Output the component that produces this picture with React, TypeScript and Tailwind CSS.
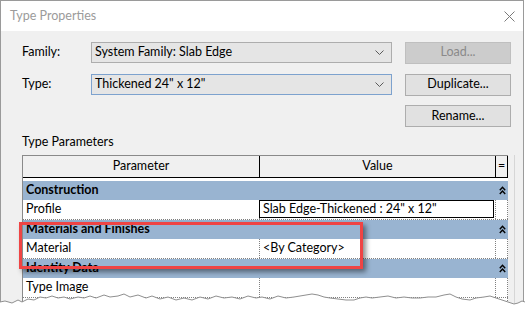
import React from "react";

function CloseIcon() {
  return (
    <svg width="11" height="11" viewBox="0 0 11 11" className="block">
      <path d="M0.5 0.5 L10.5 10.5 M10.5 0.5 L0.5 10.5" stroke="#7a7a7a" strokeWidth="1" fill="none" />
    </svg>
  );
}

function Chevron() {
  return (
    <svg width="9" height="5" viewBox="0 0 9 5" className="block">
      <path d="M0.5 0.5 L4.5 4.5 L8.5 0.5" stroke="#5a5a5a" strokeWidth="1" fill="none" />
    </svg>
  );
}

function Collapse() {
  return (
    <svg width="7" height="9" viewBox="0 0 7 9" className="block">
      <path d="M0.8 4.2 L3.5 1.2 L6.2 4.2 M0.8 8 L3.5 5 L6.2 8" stroke="#000" strokeWidth="1.4" fill="none" />
    </svg>
  );
}

function Select({ text, focused }: { text: string; focused?: boolean }) {
  return (
    <div
      className={
        "w-[301px] h-[21px] flex items-center justify-between pl-[3px] pr-[7px] bg-[#e5e5e5] border " +
        (focused ? "border-[#7da2ce]" : "border-[#adadad]")
      }
    >
      <span>{text}</span>
      <Chevron />
    </div>
  );
}

function Button({ label, disabled }: { label: string; disabled?: boolean }) {
  return (
    <div
      className={
        "w-[106px] h-[22px] flex items-center justify-center border " +
        (disabled ? "bg-[#cccccc] border-[#bfbfbf] text-[#8a8a8a]" : "bg-[#e1e1e1] border-[#adadad]")
      }
    >
      {label}
    </div>
  );
}

function Group({ title }: { title: string }) {
  return (
    <div className="flex h-[19px] bg-[#99b4d1]">
      <div className="w-[473px] pl-[3px] flex items-center font-bold">{title}</div>
      <div className="w-[12px] flex items-center justify-center">
        <Collapse />
      </div>
    </div>
  );
}

function Row({ name, value, boxed }: { name: string; value?: string; boxed?: boolean }) {
  return (
    <div className="flex h-[20px] border-b border-dotted border-[#808080]">
      <div className="w-[237px] pl-[3px] flex items-center border-r border-dotted border-[#808080]">{name}</div>
      <div className="w-[236px] border-r border-dotted border-[#808080] flex items-center">
        {boxed ? (
          <div className="w-full h-[18px] -ml-px border border-black flex items-center pl-[3px] self-start">{value}</div>
        ) : (
          <span className="pl-[3px]">{value}</span>
        )}
      </div>
      <div className="w-[12px] border-r border-dotted border-[#808080]" />
    </div>
  );
}

// jagged "torn paper" edge along the bottom
const tear =
  "0,14 5,13 12,15 18,12 22,14 28,11 34,12 40,9 46,10 52,8 58,10 64,9 70,11 78,9 84,10 90,8 96,10 104,7 110,9 118,8 124,6 130,9 138,7 146,10 152,8 160,11 168,9 176,12 184,10 192,12 200,9 208,11 216,8 224,10 232,9 240,11 248,8 256,10 262,9 270,11 278,8 286,10 294,9 300,8 306,7 312,6 318,7 324,9 330,10 338,11 346,12 354,12 360,10 366,9 372,10 380,9 388,8 396,10 404,9 412,10 420,10 428,9 436,9 444,7 450,6 456,9 462,11 470,12 476,10 484,9 490,8 496,10 502,12 508,14 514,16 518,15 522,13 525,14";

export default function App() {
  return (
    <div className="relative w-[525px] h-[309px] overflow-hidden bg-white font-['Lato',sans-serif] text-[12.5px] leading-none text-black">
      <div className="w-[524px] h-[340px] border border-[#9a9a9a] flex flex-col">
        {/* title bar */}
        <div className="h-[30px] shrink-0 bg-white flex items-center justify-between pl-[9px] pr-[8px]">
          <span className="text-[#9b9b9b]">Type Properties</span>
          <CloseIcon />
        </div>

        <div className="flex-1 bg-[#f0f0f0] pl-[21px] pt-[11px]">
          <div className="flex items-center h-[21px]">
            <span className="w-[69px]">Family:</span>
            <Select text="System Family: Slab Edge" />
            <div className="ml-[13px]">
              <Button label="Load..." disabled />
            </div>
          </div>
          <div className="flex items-center h-[21px] mt-[11px]">
            <span className="w-[69px]">Type:</span>
            <Select text={'Thickened 24" x 12"'} focused />
            <div className="ml-[13px]">
              <Button label="Duplicate..." />
            </div>
          </div>
          <div className="flex mt-[10px] pl-[383px]">
            <Button label="Rename..." />
          </div>

          <div className="mt-[7px] h-[16px] flex items-center">Type Parameters</div>

          {/* parameter grid */}
          <div className="mt-[5px] flex">
            <div className="w-[486px] h-[200px] bg-white border-l border-t border-[#8a8a8a]">
              <div className="flex h-[22px] bg-[#f0f0f0] border-b border-black">
                <div className="w-[237px] border-r border-black flex items-center justify-center">Parameter</div>
                <div className="w-[236px] border-r border-black flex items-center justify-center">Value</div>
                <div className="w-[12px] border-r border-black flex items-center justify-center">=</div>
              </div>
              <div className="h-[3px]" />
              <Group title="Construction" />
              <Row name="Profile" value={'Slab Edge-Thickened : 24" x 12"'} boxed />
              <Group title="Materials and Finishes" />
              <Row name="Material" value="<By Category>" />
              <Group title="Identity Data" />
              <Row name="Type Image" />
              <Row name="" />
            </div>
            <div className="w-[6px]" />
            <div className="w-px h-[200px] bg-[#d6d6d6]" />
          </div>
        </div>
      </div>

      {/* callout around Materials and Finishes */}
      <div className="absolute left-[19px] top-[222px] w-[344px] h-[47px] border-[3px] border-[#ef4444] shadow-[3px_3px_5px_rgba(0,0,0,0.45)]" />

      <svg className="absolute left-0 top-[288px]" width="525" height="21" viewBox="0 0 525 21">
        <polygon points={tear + " 525,21 0,21"} fill="#ffffff" />
        <polyline points={tear} fill="none" stroke="#8f8f8f" strokeWidth="1" />
      </svg>
    </div>
  );
}
